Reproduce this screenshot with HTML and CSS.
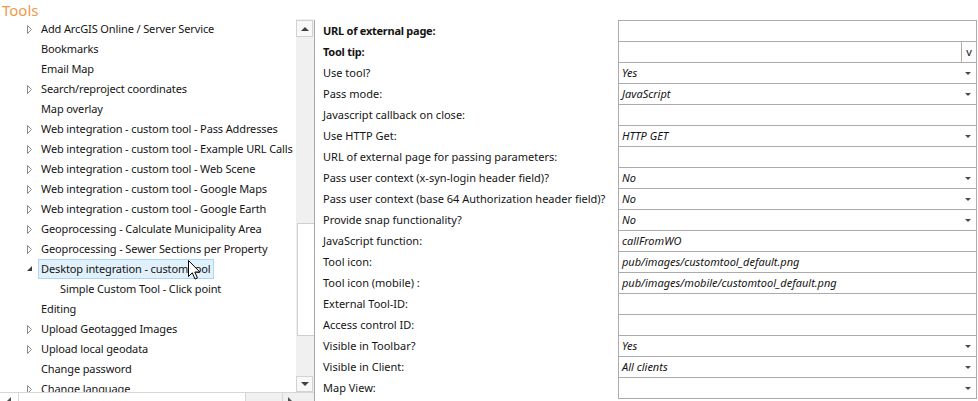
FILE: index.html
```html
<!DOCTYPE html>
<html>
<head>
<meta charset="utf-8">
<link rel="stylesheet" href="styles.css">
</head>
<body>
<div class="page">
  <div class="title">Tools</div>
  <div class="main">
    <div class="left">
      <div class="treewrap">
        <div class="tree">
          <div class="node"><span class="tw"><svg class="tri" width="6" height="9" viewBox="0 0 6 9"><polygon points="0.5,0.5 4.5,4.5 0.5,8.5" fill="none" stroke="#8a8a8a" stroke-width="1"/></svg></span><span class="lbl">Add ArcGIS Online / Server Service</span></div>
          <div class="node"><span class="tw"></span><span class="lbl">Bookmarks</span></div>
          <div class="node"><span class="tw"></span><span class="lbl">Email Map</span></div>
          <div class="node"><span class="tw"><svg class="tri" width="6" height="9" viewBox="0 0 6 9"><polygon points="0.5,0.5 4.5,4.5 0.5,8.5" fill="none" stroke="#8a8a8a" stroke-width="1"/></svg></span><span class="lbl">Search/reproject coordinates</span></div>
          <div class="node"><span class="tw"></span><span class="lbl">Map overlay</span></div>
          <div class="node"><span class="tw"><svg class="tri" width="6" height="9" viewBox="0 0 6 9"><polygon points="0.5,0.5 4.5,4.5 0.5,8.5" fill="none" stroke="#8a8a8a" stroke-width="1"/></svg></span><span class="lbl">Web integration - custom tool - Pass Addresses</span></div>
          <div class="node"><span class="tw"><svg class="tri" width="6" height="9" viewBox="0 0 6 9"><polygon points="0.5,0.5 4.5,4.5 0.5,8.5" fill="none" stroke="#8a8a8a" stroke-width="1"/></svg></span><span class="lbl">Web integration - custom tool - Example URL Calls</span></div>
          <div class="node"><span class="tw"><svg class="tri" width="6" height="9" viewBox="0 0 6 9"><polygon points="0.5,0.5 4.5,4.5 0.5,8.5" fill="none" stroke="#8a8a8a" stroke-width="1"/></svg></span><span class="lbl">Web integration - custom tool - Web Scene</span></div>
          <div class="node"><span class="tw"><svg class="tri" width="6" height="9" viewBox="0 0 6 9"><polygon points="0.5,0.5 4.5,4.5 0.5,8.5" fill="none" stroke="#8a8a8a" stroke-width="1"/></svg></span><span class="lbl">Web integration - custom tool - Google Maps</span></div>
          <div class="node"><span class="tw"><svg class="tri" width="6" height="9" viewBox="0 0 6 9"><polygon points="0.5,0.5 4.5,4.5 0.5,8.5" fill="none" stroke="#8a8a8a" stroke-width="1"/></svg></span><span class="lbl">Web integration - custom tool - Google Earth</span></div>
          <div class="node"><span class="tw"><svg class="tri" width="6" height="9" viewBox="0 0 6 9"><polygon points="0.5,0.5 4.5,4.5 0.5,8.5" fill="none" stroke="#8a8a8a" stroke-width="1"/></svg></span><span class="lbl">Geoprocessing - Calculate Municipality Area</span></div>
          <div class="node"><span class="tw"><svg class="tri" width="6" height="9" viewBox="0 0 6 9"><polygon points="0.5,0.5 4.5,4.5 0.5,8.5" fill="none" stroke="#8a8a8a" stroke-width="1"/></svg></span><span class="lbl">Geoprocessing - Sewer Sections per Property</span></div>
          <div class="node"><span class="tw"><svg class="tri" width="6" height="6" viewBox="0 0 6 6"><polygon points="5,0 5,5 0,5" fill="#3c3c3c"/></svg></span><span class="lbl sel">Desktop integration - custom tool</span></div>
          <div class="node child"><span class="tw"></span><span class="lbl">Simple Custom Tool - Click point</span></div>
          <div class="node"><span class="tw"></span><span class="lbl">Editing</span></div>
          <div class="node"><span class="tw"><svg class="tri" width="6" height="9" viewBox="0 0 6 9"><polygon points="0.5,0.5 4.5,4.5 0.5,8.5" fill="none" stroke="#8a8a8a" stroke-width="1"/></svg></span><span class="lbl">Upload Geotagged Images</span></div>
          <div class="node"><span class="tw"><svg class="tri" width="6" height="9" viewBox="0 0 6 9"><polygon points="0.5,0.5 4.5,4.5 0.5,8.5" fill="none" stroke="#8a8a8a" stroke-width="1"/></svg></span><span class="lbl">Upload local geodata</span></div>
          <div class="node"><span class="tw"></span><span class="lbl">Change password</span></div>
          <div class="node"><span class="tw"><svg class="tri" width="6" height="9" viewBox="0 0 6 9"><polygon points="0.5,0.5 4.5,4.5 0.5,8.5" fill="none" stroke="#8a8a8a" stroke-width="1"/></svg></span><span class="lbl">Change language</span></div>
          <svg class="cursor" width="13" height="21" viewBox="0 0 13 21"><path d="M0.5,0.5 L0.5,16.5 L4.3,12.8 L7,19 L9.4,18 L6.8,12 L11.8,12 Z" fill="#fff" stroke="#000" stroke-width="1" stroke-linejoin="miter"/></svg>
        </div>
        <div class="vscroll">
          <div class="sbtn"><span class="arr-up"></span></div>
          <div class="vthumb"></div>
          <div class="vfill"></div>
          <div class="sbtn down"><span class="arr-down"></span></div>
        </div>
      </div>
      <div class="hscroll">
        <div class="hbtn"><span class="arr-left"></span></div>
        <div class="hthumb"></div>
        <div class="hfill"></div>
        <div class="hbtn right"><span class="arr-right"></span></div>
        <div class="corner"></div>
      </div>
    </div>
    <div class="form">
      <div class="row"><div class="key bold">URL of external page:</div><div class="val"></div></div>
      <div class="row"><div class="key bold">Tool tip:</div><div class="val"><span class="vtext"></span><span class="vbtn">v</span></div></div>
      <div class="row"><div class="key">Use tool?</div><div class="val"><span class="vtext">Yes</span><span class="dd"></span></div></div>
      <div class="row"><div class="key">Pass mode:</div><div class="val"><span class="vtext">JavaScript</span><span class="dd"></span></div></div>
      <div class="row"><div class="key">Javascript callback on close:</div><div class="val"></div></div>
      <div class="row"><div class="key">Use HTTP Get:</div><div class="val"><span class="vtext">HTTP GET</span><span class="dd"></span></div></div>
      <div class="row"><div class="key">URL of external page for passing parameters:</div><div class="val"></div></div>
      <div class="row"><div class="key">Pass user context (x-syn-login header field)?</div><div class="val"><span class="vtext">No</span><span class="dd"></span></div></div>
      <div class="row"><div class="key">Pass user context (base 64 Authorization header field)?</div><div class="val"><span class="vtext">No</span><span class="dd"></span></div></div>
      <div class="row"><div class="key">Provide snap functionality?</div><div class="val"><span class="vtext">No</span><span class="dd"></span></div></div>
      <div class="row"><div class="key">JavaScript function:</div><div class="val"><span class="vtext">callFromWO</span></div></div>
      <div class="row"><div class="key">Tool icon:</div><div class="val"><span class="vtext">pub/images/customtool_default.png</span></div></div>
      <div class="row"><div class="key">Tool icon (mobile) :</div><div class="val"><span class="vtext">pub/images/mobile/customtool_default.png</span></div></div>
      <div class="row"><div class="key">External Tool-ID:</div><div class="val"></div></div>
      <div class="row"><div class="key">Access control ID:</div><div class="val"></div></div>
      <div class="row"><div class="key">Visible in Toolbar?</div><div class="val"><span class="vtext">Yes</span><span class="dd"></span></div></div>
      <div class="row"><div class="key">Visible in Client:</div><div class="val"><span class="vtext">All clients</span><span class="dd"></span></div></div>
      <div class="row last"><div class="key">Map View:</div><div class="val"><span class="vtext"></span><span class="dd"></span></div></div>
    </div>
  </div>
</div>
</body>
</html>
```
FILE: styles.css
```css
* { box-sizing: border-box; }
html, body { margin: 0; padding: 0; background: #fff; }
body {
  width: 978px;
  height: 401px;
  overflow: hidden;
  font-family: "Noto Sans", "Open Sans", sans-serif;
  font-size: 11px;
  color: #141414;
}
.page { width: 978px; height: 401px; display: flex; flex-direction: column; }
.title {
  height: 19px;
  padding-top: 1px;
  line-height: 19px;
  font-size: 15px;
  color: #ee9a48;
  padding-left: 2px;
  flex: none;
}
.main { display: flex; flex: 1; min-height: 0; }
.left { width: 314px; display: flex; flex-direction: column; }
.treewrap { display: flex; height: 373px; }
.tree {
  position: relative;
  width: 296px;
  overflow: hidden;
  white-space: nowrap;
  letter-spacing: -0.12px;
}
.node {
  height: 20px;
  display: flex;
  align-items: center;
  padding-left: 27px;
}
.node.child { padding-left: 46px; }
.tw { width: 11px; height: 20px; display: flex; align-items: center; flex: none; }
.tw .tri { display: block; }
.lbl {
  height: 20px;
  line-height: 18px;
  padding: 0 2px;
  border: 1px solid transparent;
}
.lbl.sel { background: #e1f1fb; border-color: #a9d7f4; }
.cursor { position: absolute; left: 188px; top: 241px; }

.vscroll {
  width: 18px;
  background: #f0f0f0;
  display: flex;
  flex-direction: column;
  padding-top: 1px;
}
.sbtn {
  width: 17px;
  height: 17px;
  border: 1px solid #d2d2d2;
  background: #f8f8f8;
  display: flex;
  align-items: center;
  justify-content: center;
  flex: none;
}
.sbtn.down { height: 16px; }
.arr-up { width: 0; height: 0; border-left: 4px solid transparent; border-right: 4px solid transparent; border-bottom: 4px solid #404040; }
.arr-down { width: 0; height: 0; border-left: 4px solid transparent; border-right: 4px solid transparent; border-top: 4px solid #404040; }
.vthumb {
  margin-top: 186px;
  margin-left: 1px;
  width: 17px;
  height: 113px;
  background: #fff;
  border: 1px solid #cfcfcf;
  border-right: none;
  flex: none;
}
.vfill { flex: 1; }

.hscroll {
  height: 17px;
  display: flex;
  border-top: 1px solid #d6d6d6;
  background: #f0f0f0;
}
.hbtn {
  width: 18px;
  background: #fff;
  display: flex;
  align-items: flex-start;
  justify-content: center;
  padding-top: 4px;
}
.hbtn.right { width: 14px; background: #f0f0f0; border-left: 1px solid #d6d6d6; }
.arr-left { width: 0; height: 0; border-top: 4px solid transparent; border-bottom: 4px solid transparent; border-right: 4px solid #505050; }
.arr-right { width: 0; height: 0; border-top: 4px solid transparent; border-bottom: 4px solid transparent; border-left: 4px solid #505050; }
.hthumb { width: 228px; background: #fff; border-left: 1px solid #d6d6d6; border-right: 1px solid #d6d6d6; }
.hfill { width: 36px; }
.corner { flex: 1; background: #f0f0f0; }

.form {
  flex: 1;
  margin-top: 1px;
  border-left: 1px solid #a8a8a8;
  display: flex;
  flex-direction: column;
}
.row { display: flex; height: 21px; }
.row.last { height: 22px; }
.key {
  width: 303px;
  padding-left: 8px;
  padding-top: 1px;
  line-height: 20px;
  white-space: nowrap;
}
.key.bold { font-weight: bold; letter-spacing: -0.25px; }
.val {
  width: 359px;
  border: 1px solid #ababab;
  border-bottom: none;
  display: flex;
  align-items: center;
  font-style: italic;
}
.row.last .val { border-bottom: 1px solid #ababab; }
.vtext { flex: 1; padding-left: 3px; line-height: 20px; }
.vbtn {
  width: 15px;
  height: 20px;
  border-left: 1px solid #ababab;
  font-style: normal;
  text-align: center;
  line-height: 20px;
  background: #fcfcfc;
}
.dd {
  width: 0; height: 0;
  margin-right: 5px;
  border-left: 3px solid transparent;
  border-right: 3px solid transparent;
  border-top: 3px solid #4a4a4a;
}
```
